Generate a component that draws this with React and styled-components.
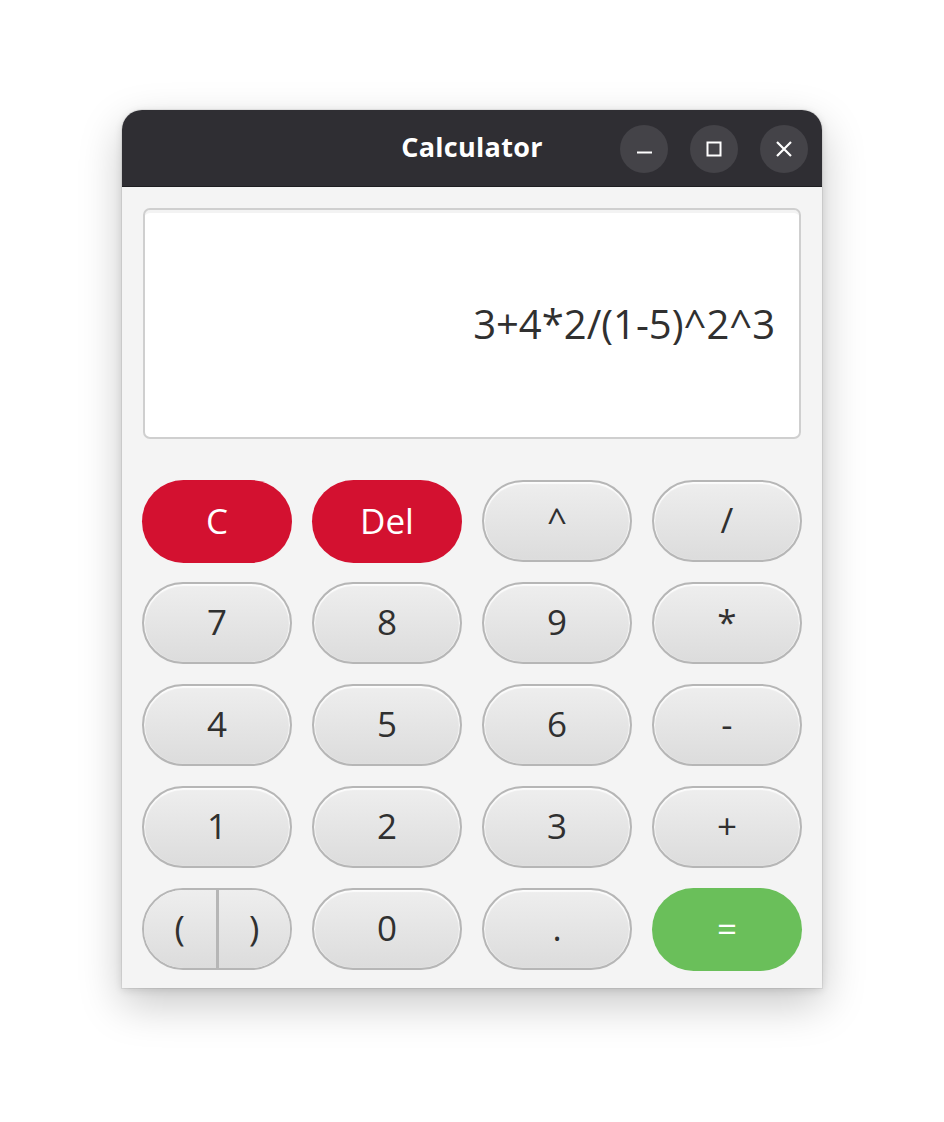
import React from "react";
import styled, { createGlobalStyle } from "styled-components";

const Global = createGlobalStyle`
  html, body { margin: 0; padding: 0; background: #ffffff; }
  body { font-family: "Open Sans", "Noto Sans", sans-serif; }
  * { box-sizing: border-box; }
`;

const Page = styled.div`
  width: 944px;
  height: 1122px;
  padding: 110px 0 0 122px;
`;

const Window = styled.div`
  width: 700px;
  height: 878px;
  border-radius: 20px 20px 0 0;
  overflow: hidden;
  background: #f4f4f4;
  box-shadow: 0 16px 44px rgba(0, 0, 0, 0.22), 0 2px 8px rgba(0, 0, 0, 0.12),
    0 0 0 1px rgba(0, 0, 0, 0.06);
  display: flex;
  flex-direction: column;
`;

const TitleBar = styled.div`
  height: 78px;
  background: #2f2e33;
  border-bottom: 1px solid #1e1e21;
  display: grid;
  grid-template-columns: 1fr auto 1fr;
  align-items: center;
  padding: 0 14px;
`;

const Title = styled.div`
  grid-column: 2;
  color: #ffffff;
  font-family: "Open Sans", "Noto Sans", sans-serif;
  font-weight: 700;
  font-size: 27px;
  letter-spacing: 0.3px;
  margin-top: -4px;
`;

const Controls = styled.div`
  grid-column: 3;
  justify-self: end;
  display: flex;
  gap: 22px;
  padding-top: 2px;
`;

const CtrlButton = styled.div`
  width: 48px;
  height: 48px;
  border-radius: 50%;
  background: #444348;
  display: flex;
  align-items: center;
  justify-content: center;
`;

const Body = styled.div`
  flex: 1;
  padding: 21px 20px 18px 20px;
  display: flex;
  flex-direction: column;
  gap: 41px;
`;

const Display = styled.div`
  margin: 0 1px;
  height: 231px;
  background: #ffffff;
  border: 2px solid #cfcfcf;
  border-radius: 7px;
  box-shadow: inset 0 4px 0 -1px #f3f3f3;
  display: flex;
  align-items: center;
  justify-content: flex-end;
  padding: 0 24px 0 20px;
  font-size: 40px;
  color: #303030;
`;

const Grid = styled.div`
  display: grid;
  grid-template-columns: repeat(4, 150px);
  grid-auto-rows: 82px;
  column-gap: 20px;
  row-gap: 20px;
`;

const Key = styled.button`
  font-family: "Open Sans", "Noto Sans", sans-serif;
  font-size: 35px;
  border-radius: 42px;
  display: flex;
  align-items: center;
  justify-content: center;
  padding: 0 0 3px 0;
  cursor: pointer;
  color: ${(p) => (p.$variant === "gray" ? "#303030" : "#ffffff")};
  background: ${(p) =>
    p.$variant === "red"
      ? "#d31130"
      : p.$variant === "green"
      ? "#6abf5a"
      : "linear-gradient(#eeeeee, #dcdcdc)"};
  border: ${(p) => (p.$variant === "gray" ? "2px solid #b6b6b6" : "none")};
  box-shadow: ${(p) =>
    p.$variant === "gray" ? "inset 0 1px 1px 1px rgba(255,255,255,0.8)" : "none"};
  height: ${(p) => (p.$variant === "gray" ? "82px" : "83px")};
`;

const SplitKey = styled.div`
  display: flex;
  height: 82px;
  border: 2px solid #b6b6b6;
  border-radius: 41px;
  overflow: hidden;
  box-shadow: inset 0 1px 1px 1px rgba(255, 255, 255, 0.8);
`;

const Half = styled.button`
  flex: 1;
  font-family: "Open Sans", "Noto Sans", sans-serif;
  font-size: 35px;
  color: #303030;
  border: none;
  padding: 0 0 3px 0;
  background: linear-gradient(#eeeeee, #dcdcdc);
  border-right: ${(p) => (p.$left ? "3px solid #b6b6b6" : "none")};
  display: flex;
  align-items: center;
  justify-content: center;
`;

const keys = [
  ["C", "red"], ["Del", "red"], ["^", "gray"], ["/", "gray"],
  ["7", "gray"], ["8", "gray"], ["9", "gray"], ["*", "gray"],
  ["4", "gray"], ["5", "gray"], ["6", "gray"], ["-", "gray"],
  ["1", "gray"], ["2", "gray"], ["3", "gray"], ["+", "gray"],
];

export default function App() {
  return (
    <>
      <Global />
      <Page>
        <Window>
          <TitleBar>
            <Title>Calculator</Title>
            <Controls>
              <CtrlButton>
                <svg width="16" height="16" viewBox="0 0 16 16">
                  <rect x="1" y="10.5" width="15" height="2" fill="#fff" />
                </svg>
              </CtrlButton>
              <CtrlButton>
                <svg width="16" height="16" viewBox="0 0 16 16">
                  <rect x="1.5" y="1.5" width="13" height="13" fill="none" stroke="#fff" strokeWidth="2" />
                </svg>
              </CtrlButton>
              <CtrlButton>
                <svg width="18" height="18" viewBox="0 0 18 18">
                  <path d="M2 2 L16 16 M16 2 L2 16" stroke="#fff" strokeWidth="2.2" />
                </svg>
              </CtrlButton>
            </Controls>
          </TitleBar>
          <Body>
            <Display>3+4*2/(1-5)^2^3</Display>
            <Grid>
              {keys.map(([label, variant]) => (
                <Key key={label} $variant={variant}>{label}</Key>
              ))}
              <SplitKey>
                <Half $left>(</Half>
                <Half>)</Half>
              </SplitKey>
              <Key $variant="gray">0</Key>
              <Key $variant="gray">.</Key>
              <Key $variant="green">=</Key>
            </Grid>
          </Body>
        </Window>
      </Page>
    </>
  );
}
